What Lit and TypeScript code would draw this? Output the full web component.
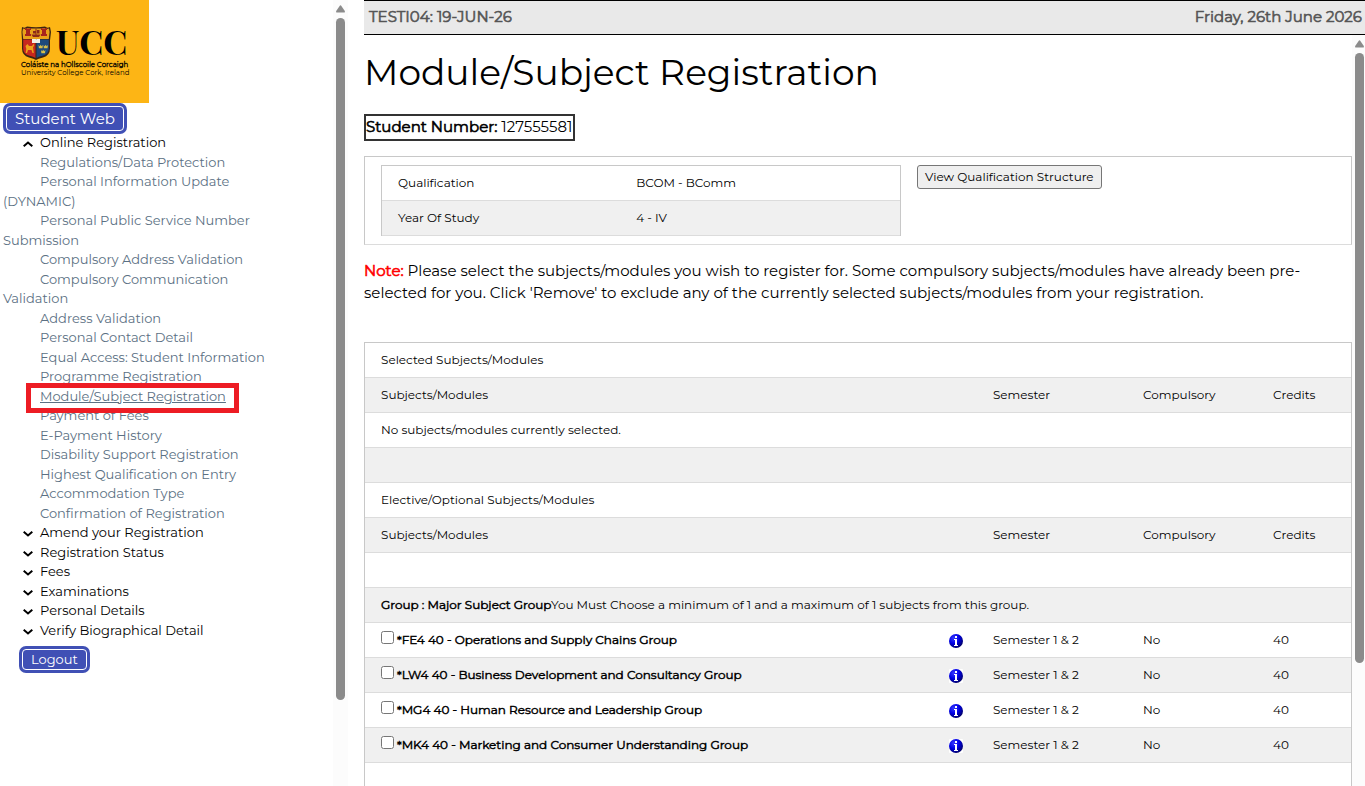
import { LitElement, html, svg, css, nothing } from "lit";
import { customElement, state, property } from "lit/decorators.js";

interface Section {
  title: string;
  items: string[];
}

interface Module {
  code: string;
  name: string;
  semester: string;
  compulsory: string;
  credits: number;
}

const SECTIONS: Section[] = [
  {
    title: "Online Registration",
    items: [
      "Regulations/Data Protection",
      "Personal Information Update (DYNAMIC)",
      "Personal Public Service Number Submission",
      "Compulsory Address Validation",
      "Compulsory Communication Validation",
      "Address Validation",
      "Personal Contact Detail",
      "Equal Access: Student Information",
      "Programme Registration",
      "Module/Subject Registration",
      "Payment of Fees",
      "E-Payment History",
      "Disability Support Registration",
      "Highest Qualification on Entry",
      "Accommodation Type",
      "Confirmation of Registration",
    ],
  },
  { title: "Amend your Registration", items: [] },
  { title: "Registration Status", items: [] },
  { title: "Fees", items: [] },
  { title: "Examinations", items: [] },
  { title: "Personal Details", items: [] },
  { title: "Verify Biographical Detail", items: [] },
];

const MODULES: Module[] = [
  { code: "FE4", name: "Operations and Supply Chains Group", semester: "Semester 1 & 2", compulsory: "No", credits: 40 },
  { code: "LW4", name: "Business Development and Consultancy Group", semester: "Semester 1 & 2", compulsory: "No", credits: 40 },
  { code: "MG4", name: "Human Resource and Leadership Group", semester: "Semester 1 & 2", compulsory: "No", credits: 40 },
  { code: "MK4", name: "Marketing and Consumer Understanding Group", semester: "Semester 1 & 2", compulsory: "No", credits: 40 },
];

const base = css`
  * { box-sizing: border-box; }
  a { color: inherit; text-decoration: none; }
  button, input { font: inherit; color: inherit; margin: 0; }
  /* Emboldened regular face, keeps the regular widths. */
  .strong { font-weight: 400; -webkit-text-stroke: 0.04em currentColor; }
`;

/* Vertical scroll rail with an arrow and a rounded thumb. */
@customElement("scroll-rail")
class ScrollRail extends LitElement {
  @property({ type: Number }) size = 80;

  static styles = css`
    :host { display: flex; flex-direction: column; align-items: center; width: 15px; flex: none; background: #fcfcfc; }
    .arrow { display: block; flex: none; margin: 5px 0; }
    .thumb { width: 9px; border-radius: 5px; background: #8b8b8b; }
  `;

  render() {
    return html`
      <svg class="arrow" width="9" height="8" viewBox="0 0 9 8"><path d="M4 .4Q4.500 0 5 .4L8.800 6Q9.200 7.500 8 7.500H1Q-.2 7.500 .2 6Z" fill="#8b8b8b" /></svg>
      <div class="thumb" style="height:${this.size}%"></div>
    `;
  }
}

@customElement("college-logo")
class CollegeLogo extends LitElement {
  static styles = [base, css`
    :host { display: block; width: 149px; background: #fdb515; }
    svg { display: block; }
    .word { font: bold 34px "Playfair Display", "Liberation Serif", serif; }
    .small { font-family: Montserrat, Inter, sans-serif; font-size: 7px; }
    .heavy { stroke: #000; stroke-width: 0.3; }
  `];

  render() {
    const castle = (x: number) => svg`<path d="M${x} 28v2h1v4h-1v2h6v-2h-1v-4h1v-2h-1.500v1h-1v-1h-1v1h-1v-1z" fill="#a8241c" />`;
    const crown = (x: number, y: number) => svg`<path d="M${x} ${y}l1.200 1.200 1-1.400 1 1.400 1.200-1.200-.4 3.200h-3.600z" fill="#d8c04a" />`;
    return html`
      <svg width="149" height="103" viewBox="0 0 149 103" role="img" aria-label="University College Cork">
        <path d="M22 27q3 1.500 5-.5 9 1.500 18 0 2 2 5 .5l1 5-1 8.500v8q0 7-7 9-5 1-7 2.500-2-1.500-7-2.500-7-2-7-9v-8L21.500 32z" fill="#3b2412" />
        <path d="M23 28.500q3 1 4.500-.5 8.500 1.200 17 0 1.500 1.500 4.500.5l.6 3.500-.8 7H23.200l-.8-7z" fill="#e9a21a" />
        <path d="M23.200 39.500h12.300V58q-2-1.500-6-2.200-6.300-1.500-6.300-7.300z" fill="#c8281e" />
        <path d="M36.500 39.500h12.300v9q0 5.800-6.300 7.300-4 .7-6 2.200z" fill="#1c4a7c" />
        ${castle(25)}${castle(41)}
        <path d="M31.500 34.500h9l-1.500 2.500h-6zM35.500 28.500h1v6h-1zM33 31h3v2.500h-3zM37 30h2.500v3.500H37z" fill="#8c2a18" />
        <path d="M32 39h3.700l.5.600.500-.6H40v4h-8z" fill="#f4efe2" />
        <path d="M25.500 46l2-2 1.500 2h3l1.500-2 .8 1-1.300 2.500.8 5.500h-1.300l-1-3h-3.500l-1 3h-1.300l.6-4z" fill="#eda11b" />
        ${crown(38.500, 45)}${crown(43.500, 45)}${crown(41, 50)}
        <text class="word" x="56" y="55">UCC</text>
        <text class="small heavy" x="21" y="67">Coláiste na hOllscoile Corcaigh</text>
        <text class="small" x="21" y="75">University College Cork, Ireland</text>
      </svg>
    `;
  }
}

@customElement("student-menu")
class StudentMenu extends LitElement {
  @state() private open = new Set<string>(["Online Registration"]);

  static styles = [base, css`
    :host { display: block; flex: 1; min-width: 0; }
    .pill { display: block; width: fit-content; border: 1px solid #fff; border-radius: 4px; background: #4050b5; box-shadow: 0 0 0 3px #4050b5; color: #fff; cursor: pointer; }
    .home { margin: 3px 6px 2px; padding: 1px 8px; font-size: 15px; line-height: 21px; }
    .logout { margin: 9px 22px; padding: 1px 8px; font-size: 13px; line-height: 17px; }
    .menu { list-style: none; margin: 0; padding: 0 3px; max-width: 288px; font-size: 13px; line-height: 1.5; }
    .toggle { display: flex; align-items: center; gap: 7px; margin: 0; padding: 0 0 0 20px; border: 0; background: none; color: #000; cursor: pointer; }
    .chevron { flex: none; margin-top: 3px; }
    .sub { list-style: none; margin: 0; padding: 0; color: #5b7083; }
    .item { position: relative; text-indent: 37px; }
    .current { text-decoration: underline; }
    .marker { position: absolute; left: 23px; top: -4px; width: 213px; height: 30px; border: 5px solid #ed1c24; z-index: 1; pointer-events: none; }
  `];

  private flip(title: string) {
    const next = new Set(this.open);
    if (!next.delete(title)) next.add(title);
    this.open = next;
  }

  render() {
    return html`
      <college-logo></college-logo>
      <a class="pill home" href="#">Student Web</a>
      <ul class="menu">
        ${SECTIONS.map((s) => {
          const open = this.open.has(s.title);
          return html`<li>
            <button class="toggle" aria-expanded=${open} @click=${() => this.flip(s.title)}>
              <svg class="chevron" width="10" height="6" viewBox="0 0 10 6" fill="none" stroke="#000" stroke-width="2">
                <path d=${open ? "M.7 5.200L5 1.500l4.300 3.700" : "M.7 .8L5 4.500 9.300.8"} />
              </svg>${s.title}
            </button>
            ${open && s.items.length
              ? html`<ul class="sub">${s.items.map((t) => {
                  const current = t === "Module/Subject Registration";
                  return html`<li class="item"><a class=${current ? "current" : ""} href="#">${t}</a>${current ? html`<span class="marker"></span>` : nothing}</li>`;
                })}</ul>`
              : nothing}
          </li>`;
        })}
      </ul>
      <button class="pill logout">Logout</button>
    `;
  }
}

@customElement("module-table")
class ModuleTable extends LitElement {
  static styles = [base, css`
    :host { display: block; }
    .table { width: 100%; border: 1px solid #c8c8c8; border-spacing: 0; table-layout: fixed; font-size: 12px; line-height: 18px; }
    .cell { height: 35px; padding: 0 0 0 16px; border-bottom: 1px solid #dcdcdc; text-align: left; font-weight: 400; white-space: nowrap; vertical-align: middle; }
    .row:nth-child(even) { background: #f0f0f0; }
    .icon { width: 44px; }
    .semester { width: 150px; }
    .compulsory { width: 130px; }
    .credits { width: 94px; }
    .pick { display: flex; align-items: center; gap: 3px; }
    .tick { width: 13px; height: 13px; margin: 0 0 6px; }
    .info { display: block; margin-top: 2px; border-radius: 1px; background: #fff; }
  `];

  private heading() {
    return html`<tr class="row">
      <th class="cell" scope="col" colspan="2">Subjects/Modules</th>
      <th class="cell" scope="col">Semester</th>
      <th class="cell" scope="col">Compulsory</th>
      <th class="cell" scope="col">Credits</th>
    </tr>`;
  }

  private full(content: unknown = nothing) {
    return html`<tr class="row"><td class="cell" colspan="5">${content}</td></tr>`;
  }

  private infoIcon() {
    return html`<svg class="info" width="14" height="14" viewBox="0 0 14 14" role="img" aria-label="Information">
      <defs><radialGradient id="ball" cx=".35" cy=".3" r=".75">
        <stop offset="0" stop-color="#3a3aff" /><stop offset=".5" stop-color="#0000e6" /><stop offset="1" stop-color="#000060" />
      </radialGradient></defs>
      <circle cx="7" cy="7" r="7" fill="url(#ball)" />
      <path d="M6 2h2v2H6zM5 5h3v6h1v1H5v-1h1V6H5z" fill="#fff" />
    </svg>`;
  }

  render() {
    return html`<table class="table">
      <colgroup>
        <col /><col class="icon" /><col class="semester" /><col class="compulsory" /><col class="credits" />
      </colgroup>
      <tbody>
        ${this.full("Selected Subjects/Modules")}
        ${this.heading()}
        ${this.full("No subjects/modules currently selected.")}
        ${this.full()}
        ${this.full("Elective/Optional Subjects/Modules")}
        ${this.heading()}
        ${this.full()}
        ${this.full(html`<b class="strong">Group : Major Subject Group</b>You Must Choose a minimum of 1 and a maximum of 1 subjects from this group.`)}
        ${MODULES.map((m) => html`<tr class="row">
          <td class="cell">
            <label class="pick"><input class="tick" type="checkbox" /><b class="strong">*${m.code} ${m.credits} - ${m.name}</b></label>
          </td>
          <td class="cell">${this.infoIcon()}</td>
          <td class="cell">${m.semester}</td>
          <td class="cell">${m.compulsory}</td>
          <td class="cell">${m.credits}</td>
        </tr>`)}
        ${this.full()}
        ${this.full()}
      </tbody>
    </table>`;
  }
}

@customElement("app-root")
class AppRoot extends LitElement {
  static styles = [base, css`
    :host { display: flex; gap: 16px; height: 100vh; overflow: hidden; background: #fff; color: #000; font-family: Montserrat, Inter, sans-serif; font-size: 15px; }
    .side { display: flex; flex: none; width: 348px; }
    .main { display: flex; flex-direction: column; flex: 1; min-width: 0; }
    .bar { display: flex; justify-content: space-between; flex: none; padding: 4px 3px 6px 5px; border: solid #000; border-width: 1px 0; background: #e9e9e9; color: #555; line-height: 23px; }
    .body { display: flex; flex: 1; min-height: 0; margin-right: -2px; }
    .page { flex: 1; min-width: 0; overflow: hidden; }
    .title { margin: 0; padding: 15px 0 19px; font-size: 36px; font-weight: 400; line-height: 45px; }
    .number { display: inline-block; border: 2px solid #333; padding-bottom: 1px; line-height: 22px; margin: 0 0 15px; vertical-align: top; }
    .panel { display: flex; align-items: flex-start; gap: 16px; padding: 8px 16px; border: 1px solid #c8c8c8; border-bottom-color: #dcdcdc; font-size: 12px; line-height: 18px; }
    .facts { width: 520px; border: 1px solid #c8c8c8; border-bottom: 0; border-spacing: 0; table-layout: fixed; }
    .fact { height: 35px; padding: 0 0 0 16px; border-bottom: 1px solid #dcdcdc; text-align: left; font-weight: 400; }
    .name { width: 46%; }
    .shade { background: #f0f0f0; }
    .view { padding: 2px 7px; border: 1px solid #767676; border-radius: 3px; background: #efefef; }
    .note { margin: 15px 0 38px; line-height: 22px; }
    .warn { color: #f00; }
  `];

  render() {
    return html`
      <nav class="side" aria-label="Student menu">
        <student-menu></student-menu>
        <scroll-rail .size=${86.8}></scroll-rail>
      </nav>
      <main class="main">
        <header class="bar"><span class="strong">TESTI04: 19-JUN-26</span><span class="strong">Friday, 26th June 2026</span></header>
        <div class="body">
          <div class="page">
            <h1 class="title">Module/Subject Registration</h1>
            <div class="number"><b class="strong">Student Number:</b> 127555581</div>
            <section class="panel">
              <table class="facts">
                <tr><th class="fact name" scope="row">Qualification</th><td class="fact">BCOM - BComm</td></tr>
                <tr class="shade"><th class="fact name" scope="row">Year Of Study</th><td class="fact">4 - IV</td></tr>
              </table>
              <button class="view">View Qualification Structure</button>
            </section>
            <p class="note"><b class="strong warn">Note:</b> Please select the subjects/modules you wish to register for. Some compulsory subjects/modules have already been pre-selected for you. Click 'Remove' to exclude any of the currently selected subjects/modules from your registration.</p>
            <module-table></module-table>
          </div>
          <scroll-rail .size=${81.2}></scroll-rail>
        </div>
      </main>
    `;
  }
}
